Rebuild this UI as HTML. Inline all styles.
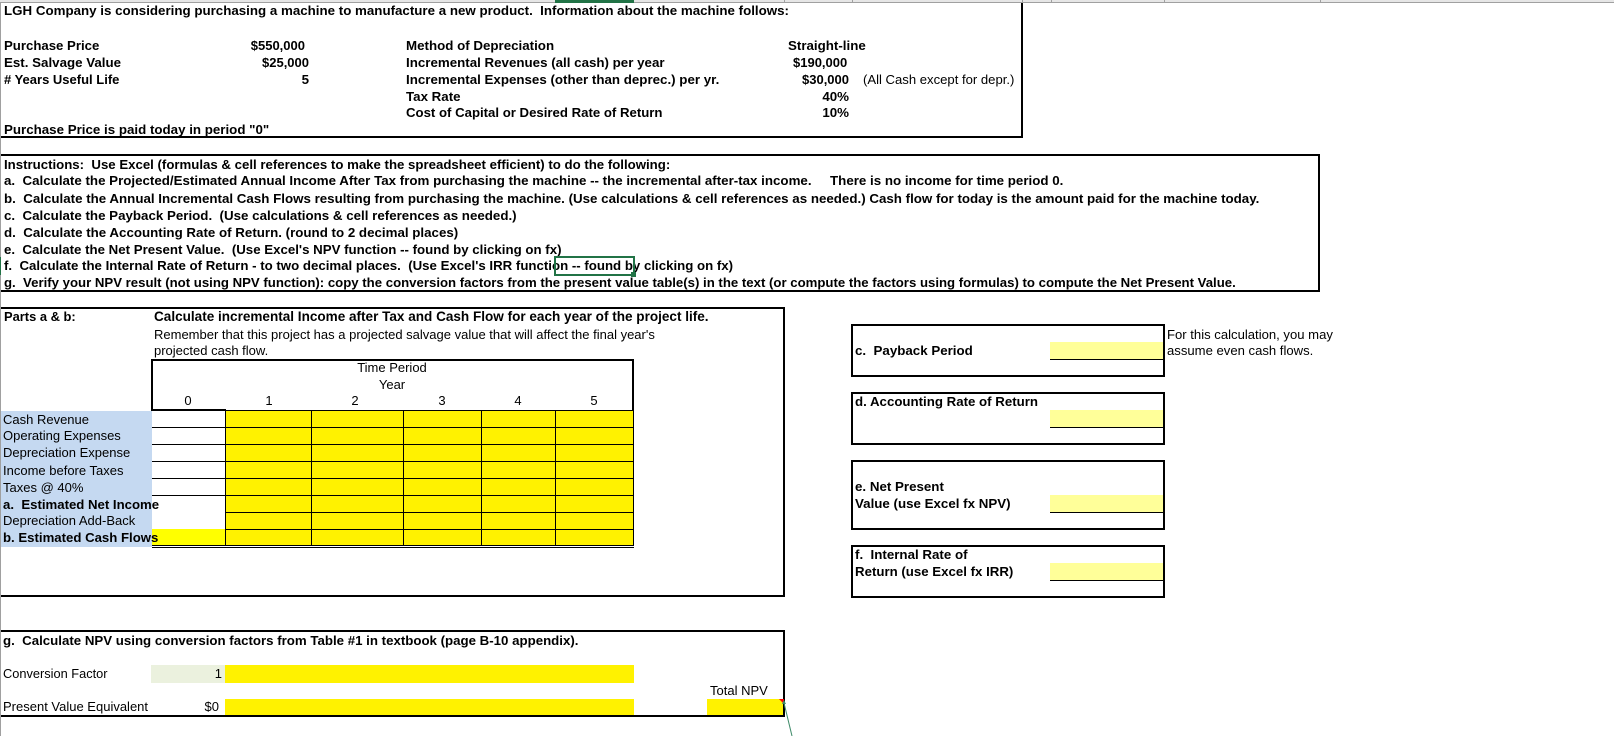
<!DOCTYPE html>
<html><head><meta charset="utf-8"><title>LGH Company</title>
<style>
html,body{margin:0;padding:0;background:#fff}
#p{position:relative;width:1614px;height:736px;overflow:hidden;background:#fff;font-family:"Liberation Sans",Arial,sans-serif;color:#000}
.a{position:absolute}
.k{background:#000}
.box{position:absolute;box-sizing:border-box;border:2px solid #000}
.t,.b,.r,.rb,.c{position:absolute;white-space:pre;line-height:16px;font-size:13px}
.b,.rb{font-weight:bold;font-size:13.33px}
.r,.rb{width:120px;text-align:right}
.c{width:100px;text-align:center}
</style></head><body><div id="p">

<!-- header strip -->
<div class="a" style="left:0;top:0;width:1614px;height:2px;background:#e6e6e6"></div>
<div class="a" style="left:0;top:2px;width:1614px;height:1px;background:#a0a0a0"></div>
<div class="a" style="left:555px;top:0;width:79px;height:3px;background:#217346"></div>
<div class="a" style="left:784px;top:0;width:1px;height:2px;background:#a0a0a0"></div>
<div class="a" style="left:852px;top:0;width:1px;height:2px;background:#a0a0a0"></div>
<div class="a" style="left:1022px;top:0;width:1px;height:2px;background:#a0a0a0"></div>
<div class="a" style="left:1051px;top:0;width:1px;height:2px;background:#a0a0a0"></div>
<div class="a" style="left:1164px;top:0;width:1px;height:2px;background:#a0a0a0"></div>
<div class="a" style="left:1320px;top:0;width:1px;height:2px;background:#a0a0a0"></div>
<!-- left gutter -->
<div class="a" style="left:0;top:3px;width:1px;height:733px;background:#a0a0a0"></div>
<div class="a" style="left:0;top:257px;width:1px;height:18px;background:#217346"></div>

<!-- top box -->
<div class="a k" style="left:1021px;top:3px;width:2px;height:135px"></div>
<div class="a k" style="left:1px;top:136px;width:1022px;height:2px"></div>
<div class="b" style="left:4px;top:3px">LGH Company is considering purchasing a machine to manufacture a new product.  Information about the machine follows:</div>
<div class="b" style="left:4px;top:38px;font-size:13.2px">Purchase Price</div>
<div class="b" style="left:4px;top:55px">Est. Salvage Value</div>
<div class="b" style="left:4px;top:72px;font-size:13px"># Years Useful Life</div>
<div class="b" style="left:4px;top:122px">Purchase Price is paid today in period "0"</div>
<div class="rb" style="left:185px;top:38px;font-size:13px">$550,000</div>
<div class="rb" style="left:189px;top:55px;font-size:13px">$25,000</div>
<div class="rb" style="left:189px;top:72px">5</div>
<div class="b" style="left:406px;top:38px">Method of Depreciation</div>
<div class="b" style="left:406px;top:55px">Incremental Revenues (all cash) per year</div>
<div class="b" style="left:406px;top:72px">Incremental Expenses (other than deprec.) per yr.</div>
<div class="b" style="left:406px;top:89px">Tax Rate</div>
<div class="b" style="left:406px;top:105px;font-size:13.2px">Cost of Capital or Desired Rate of Return</div>
<div class="b" style="left:788px;top:38px">Straight-line</div>
<div class="b" style="left:793px;top:55px;font-size:13px">$190,000</div>
<div class="rb" style="left:729px;top:72px;font-size:13px">$30,000</div>
<div class="rb" style="left:729px;top:89px">40%</div>
<div class="rb" style="left:729px;top:105px">10%</div>
<div class="t" style="left:863px;top:72px;font-size:13.1px">(All Cash except for depr.)</div>

<!-- instructions -->
<div class="a k" style="left:1px;top:154px;width:1319px;height:2px"></div>
<div class="a k" style="left:1318px;top:154px;width:2px;height:138px"></div>
<div class="a k" style="left:1px;top:290px;width:1319px;height:2px"></div>
<div class="b" style="left:4px;top:157px;font-size:13.23px">Instructions:  Use Excel (formulas &amp; cell references to make the spreadsheet efficient) to do the following:</div>
<div class="b" style="left:4px;top:173px">a.  Calculate the Projected/Estimated Annual Income After Tax from purchasing the machine -- the incremental after-tax income.     There is no income for time period 0.</div>
<div class="b" style="left:4px;top:191px">b.  Calculate the Annual Incremental Cash Flows resulting from purchasing the machine. (Use calculations &amp; cell references as needed.) Cash flow for today is the amount paid for the machine today.</div>
<div class="b" style="left:4px;top:208px">c.  Calculate the Payback Period.  (Use calculations &amp; cell references as needed.)</div>
<div class="b" style="left:4px;top:225px">d.  Calculate the Accounting Rate of Return. (round to 2 decimal places)</div>
<div class="b" style="left:4px;top:242px;font-size:13.28px">e.  Calculate the Net Present Value.  (Use Excel's NPV function -- found by clicking on fx)</div>
<div class="b" style="left:4px;top:258px;font-size:13.26px">f.  Calculate the Internal Rate of Return - to two decimal places.  (Use Excel's IRR function -- found by clicking on fx)</div>
<div class="b" style="left:4px;top:275px;font-size:13.2px">g.  Verify your NPV result (not using NPV function): copy the conversion factors from the present value table(s) in the text (or compute the factors using formulas) to compute the Net Present Value.</div>

<!-- selection -->
<div class="box" style="left:554px;top:256px;width:81px;height:20px;border-color:#217346"></div>
<div class="a" style="left:631px;top:272px;width:5px;height:5px;background:#217346"></div>

<!-- parts box -->
<div class="a k" style="left:1px;top:307px;width:784px;height:2px"></div>
<div class="a k" style="left:783px;top:307px;width:2px;height:290px"></div>
<div class="a k" style="left:1px;top:595px;width:784px;height:2px"></div>
<div class="b" style="left:4px;top:309px;font-size:12.9px">Parts a &amp; b:</div>
<div class="b" style="left:154px;top:309px;font-size:13.55px">Calculate incremental Income after Tax and Cash Flow for each year of the project life.</div>
<div class="t" style="left:154px;top:327px">Remember that this project has a projected salvage value that will affect the final year's</div>
<div class="t" style="left:154px;top:343px">projected cash flow.</div>

<!-- table fills -->
<div class="a" style="left:1px;top:411px;width:151px;height:136px;background:#c5d9f1"></div>
<div class="a" style="left:226px;top:411px;width:408px;height:134px;background:#fff200"></div>
<div class="a" style="left:152px;top:529px;width:74px;height:16px;background:#ffff00"></div>
<!-- table header box -->
<div class="a k" style="left:151px;top:359px;width:483px;height:2px"></div>
<div class="a k" style="left:151px;top:359px;width:2px;height:52px"></div>
<div class="a k" style="left:632px;top:359px;width:2px;height:52px"></div>
<div class="a k" style="left:151px;top:409px;width:75px;height:2px"></div>
<div class="a k" style="left:226px;top:410px;width:408px;height:1px"></div>
<!-- grid -->
<div class="a k" style="left:152px;top:427px;width:482px;height:1px"></div>
<div class="a k" style="left:152px;top:444px;width:482px;height:1px"></div>
<div class="a k" style="left:152px;top:461px;width:482px;height:1px"></div>
<div class="a k" style="left:152px;top:478px;width:482px;height:1px"></div>
<div class="a k" style="left:152px;top:495px;width:482px;height:1px"></div>
<div class="a k" style="left:226px;top:512px;width:408px;height:1px"></div>
<div class="a k" style="left:226px;top:529px;width:408px;height:1px"></div>
<div class="a k" style="left:152px;top:545px;width:482px;height:1px"></div>
<div class="a k" style="left:152px;top:547px;width:482px;height:1px"></div>
<div class="a k" style="left:225px;top:410px;width:1px;height:136px"></div>
<div class="a k" style="left:311px;top:410px;width:1px;height:136px"></div>
<div class="a k" style="left:403px;top:410px;width:1px;height:136px"></div>
<div class="a k" style="left:481px;top:410px;width:1px;height:136px"></div>
<div class="a k" style="left:555px;top:410px;width:1px;height:136px"></div>
<div class="a k" style="left:633px;top:410px;width:1px;height:136px"></div>
<!-- header text -->
<div class="c" style="left:342px;top:360px">Time Period</div>
<div class="c" style="left:342px;top:377px">Year</div>
<div class="c" style="left:138px;top:393px">0</div>
<div class="c" style="left:219px;top:393px">1</div>
<div class="c" style="left:305px;top:393px">2</div>
<div class="c" style="left:392px;top:393px">3</div>
<div class="c" style="left:468px;top:393px">4</div>
<div class="c" style="left:544px;top:393px">5</div>
<!-- row labels -->
<div class="t" style="left:3px;top:412px">Cash Revenue</div>
<div class="t" style="left:3px;top:428px">Operating Expenses</div>
<div class="t" style="left:3px;top:445px">Depreciation Expense</div>
<div class="t" style="left:3px;top:463px">Income before Taxes</div>
<div class="t" style="left:3px;top:480px">Taxes @ 40%</div>
<div class="b" style="left:3px;top:497px;font-size:13.2px">a.  Estimated Net Income</div>
<div class="t" style="left:3px;top:513px">Depreciation Add-Back</div>
<div class="b" style="left:3px;top:530px;font-size:13.2px">b. Estimated Cash Flows</div>

<!-- side boxes -->
<div class="box" style="left:851px;top:324px;width:314px;height:53px"></div>
<div class="box" style="left:851px;top:392px;width:314px;height:53px"></div>
<div class="box" style="left:851px;top:460px;width:314px;height:70px"></div>
<div class="box" style="left:851px;top:545px;width:314px;height:53px"></div>
<div class="a" style="left:1050px;top:342px;width:113px;height:17px;background:#ffff99;border-bottom:1px solid #000"></div>
<div class="a" style="left:1050px;top:410px;width:113px;height:17px;background:#ffff99;border-bottom:1px solid #000"></div>
<div class="a" style="left:1050px;top:495px;width:113px;height:17px;background:#ffff99;border-bottom:1px solid #000"></div>
<div class="a" style="left:1050px;top:563px;width:113px;height:17px;background:#ffff99;border-bottom:1px solid #000"></div>
<div class="b" style="left:855px;top:343px">c.  Payback Period</div>
<div class="b" style="left:855px;top:394px;font-size:13.28px">d. Accounting Rate of Return</div>
<div class="b" style="left:855px;top:479px">e. Net Present</div>
<div class="b" style="left:855px;top:496px">Value (use Excel fx NPV)</div>
<div class="b" style="left:855px;top:547px">f.  Internal Rate of</div>
<div class="b" style="left:855px;top:564px;font-size:13.25px">Return (use Excel fx IRR)</div>
<div class="t" style="left:1167px;top:327px;font-size:13.1px">For this calculation, you may</div>
<div class="t" style="left:1167px;top:343px;font-size:13.1px">assume even cash flows.</div>

<!-- g box -->
<div class="a k" style="left:1px;top:630px;width:784px;height:2px"></div>
<div class="a k" style="left:783px;top:630px;width:2px;height:87px"></div>
<div class="a k" style="left:1px;top:715px;width:784px;height:2px"></div>
<div class="b" style="left:3px;top:633px;font-size:13.28px">g.  Calculate NPV using conversion factors from Table #1 in textbook (page B-10 appendix).</div>
<div class="a" style="left:151px;top:665px;width:74px;height:18px;background:#ebf1de"></div>
<div class="a" style="left:225px;top:665px;width:409px;height:18px;background:#fff200"></div>
<div class="a" style="left:225px;top:699px;width:409px;height:16px;background:#fff200"></div>
<div class="a" style="left:707px;top:699px;width:76px;height:16px;background:#fff200"></div>
<div class="t" style="left:3px;top:666px;font-size:12.8px">Conversion Factor</div>
<div class="r" style="left:102px;top:666px">1</div>
<div class="t" style="left:3px;top:699px">Present Value Equivalent</div>
<div class="r" style="left:99px;top:699px">$0</div>
<div class="t" style="left:710px;top:683px">Total NPV</div>
<svg class="a" style="left:770px;top:690px" width="30" height="46" viewBox="0 0 30 46">
<polygon points="9,9 14,9 14,14" fill="#ff0000"/>
<line x1="14" y1="13" x2="22" y2="46" stroke="#3d8a68" stroke-width="1"/>
<polygon points="14,10 12,14 16,14" fill="#3d8a68"/>
</svg>
</div></body></html>
